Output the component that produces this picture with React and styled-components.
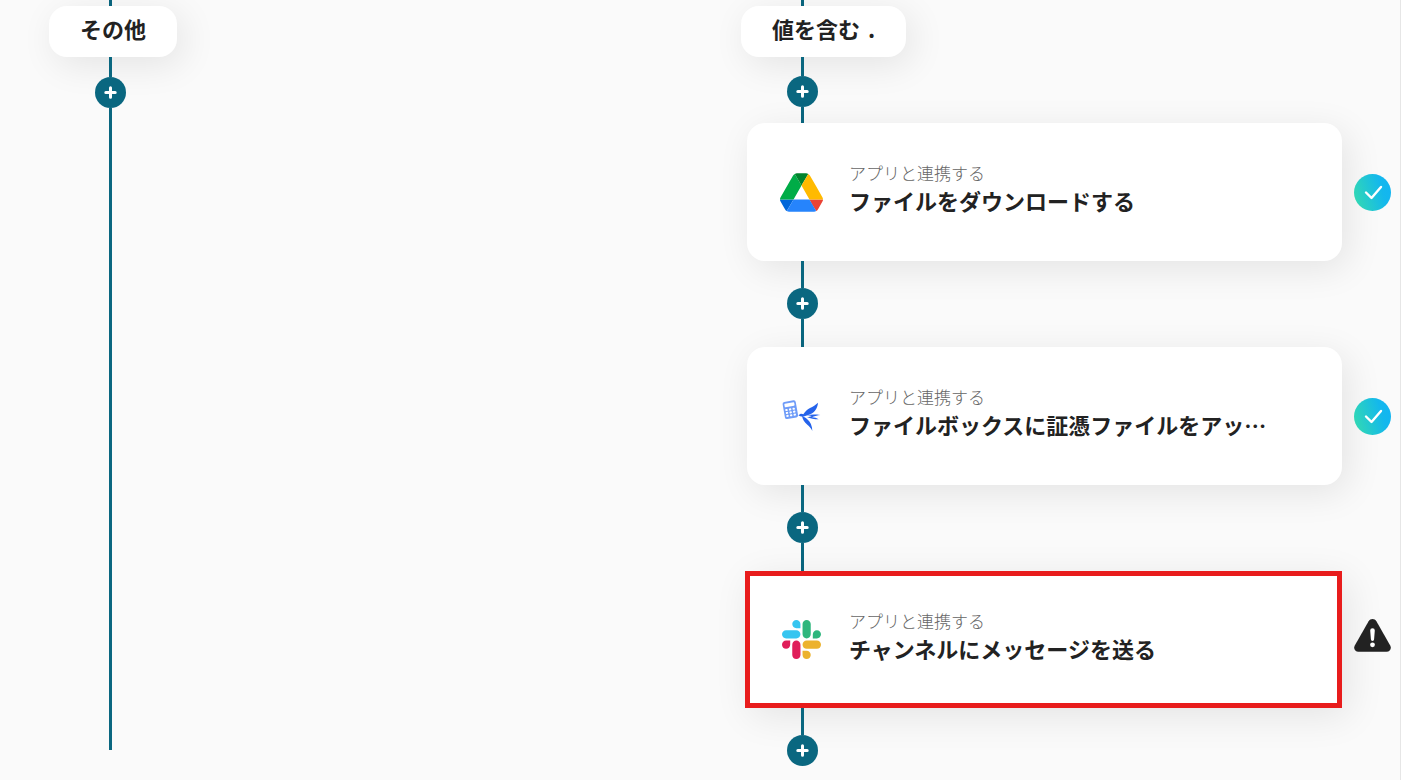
import styled, { createGlobalStyle } from "styled-components";

const steps = [
  {
    id: "download",
    app: "drive",
    title: "ファイルをダウンロードする",
    status: "done",
  },
  {
    id: "upload",
    app: "bird",
    title: "ファイルボックスに証憑ファイルをアッ…",
    status: "done",
  },
  {
    id: "message",
    app: "slack",
    title: "チャンネルにメッセージを送る",
    status: "warning",
    selected: true,
  },
];

function DriveIcon() {
  return (
    <svg width="43" height="39" viewBox="0 0 87.3 78" aria-hidden="true">
      <path fill="#0066da" d="m6.6 66.85 3.85 6.65c.8 1.4 1.95 2.5 3.3 3.3l13.75-23.8h-27.5c0 1.55.4 3.1 1.2 4.5z" />
      <path fill="#00ac47" d="m43.65 25-13.75-23.8c-1.35.8-2.5 1.9-3.3 3.3l-25.4 44a9.06 9.06 0 0 0 -1.2 4.5h27.5z" />
      <path fill="#ea4335" d="m73.55 76.8c1.35-.8 2.5-1.9 3.3-3.3l1.6-2.75 7.65-13.25c.8-1.4 1.2-2.95 1.2-4.5h-27.502l5.852 11.5z" />
      <path fill="#00832d" d="m43.65 25 13.75-23.8c-1.35-.8-2.9-1.2-4.5-1.2h-18.5c-1.6 0-3.15.45-4.5 1.2z" />
      <path fill="#2684fc" d="m59.8 53h-32.3l-13.75 23.8c1.35.8 2.9 1.2 4.5 1.2h50.8c1.6 0 3.15-.45 4.5-1.2z" />
      <path fill="#ffba00" d="m73.4 26.5-12.7-22c-.8-1.4-1.95-2.5-3.3-3.3l-13.75 23.8 16.15 28h27.45c0-1.55-.4-3.1-1.2-4.5z" />
    </svg>
  );
}

function BirdIcon() {
  return (
    <svg width="44" height="44" viewBox="28 27 132 132" aria-hidden="true">
      <g transform="rotate(-10 62 74)">
        <rect x="42" y="48" width="40" height="52" rx="6" fill="#6f9cf8" />
        <rect x="47" y="54" width="30" height="10" rx="2" fill="#fff" />
        <g fill="#fff">
          <rect x="47" y="70" width="7" height="6" rx="2" />
          <rect x="58" y="70" width="7" height="6" rx="2" />
          <rect x="69" y="70" width="7" height="6" rx="2" />
          <rect x="47" y="79" width="7" height="6" rx="2" />
          <rect x="58" y="79" width="7" height="6" rx="2" />
          <rect x="69" y="79" width="7" height="6" rx="2" />
          <rect x="47" y="88" width="7" height="6" rx="2" />
          <rect x="58" y="88" width="7" height="6" rx="2" />
          <rect x="69" y="88" width="7" height="6" rx="2" />
        </g>
      </g>
      <g fill="#2563eb">
        <path d="M86 91l6-4c3-1 7 0 9 1 5-8 11-14 20-19 9-5 17-9 24-16-1 15-9 28-22 34-5 2-10 4-14 5-3 1-6 2-9 3-6 0-11-2-14-4z" />
        <path d="M97 93c5 3 11 5 15 9 10 8 16 21 16 36-4-9-9-14-15-19-9-7-14-15-16-26z" />
        <path d="M109 91c14-3 28-3 43-1-8 1-16 3-22 5l-3 2c8 0 14 2 20 6-13 0-25-2-35-7 6 0 10-1 14-3-5-1-10-2-17-2z" />
      </g>
    </svg>
  );
}

function SlackIcon() {
  return (
    <svg width="39" height="39" viewBox="0 0 122.8 122.8" aria-hidden="true">
      <path fill="#e01e5a" d="M25.8 77.6c0 7.1-5.8 12.9-12.9 12.9S0 84.7 0 77.6s5.8-12.9 12.9-12.9h12.9v12.9zm6.5 0c0-7.1 5.8-12.9 12.9-12.9s12.9 5.8 12.9 12.9v32.3c0 7.1-5.8 12.9-12.9 12.9s-12.9-5.8-12.9-12.9V77.6z" />
      <path fill="#36c5f0" d="M45.2 25.8c-7.1 0-12.9-5.8-12.9-12.9S38.1 0 45.2 0s12.9 5.8 12.9 12.9v12.9H45.2zm0 6.5c7.1 0 12.9 5.8 12.9 12.9s-5.8 12.9-12.9 12.9H12.9C5.8 58.1 0 52.3 0 45.2s5.8-12.9 12.9-12.9h32.3z" />
      <path fill="#2eb67d" d="M97 45.2c0-7.1 5.8-12.9 12.9-12.9s12.9 5.8 12.9 12.9-5.8 12.9-12.9 12.9H97V45.2zm-6.5 0c0 7.1-5.8 12.9-12.9 12.9s-12.9-5.8-12.9-12.9V12.9C64.7 5.8 70.5 0 77.6 0s12.9 5.8 12.9 12.9v32.3z" />
      <path fill="#ecb22e" d="M77.6 97c7.1 0 12.9 5.8 12.9 12.9s-5.8 12.9-12.9 12.9-12.9-5.8-12.9-12.9V97h12.9zm0-6.5c-7.1 0-12.9-5.8-12.9-12.9s5.8-12.9 12.9-12.9h32.3c7.1 0 12.9 5.8 12.9 12.9s-5.8 12.9-12.9 12.9H77.6z" />
    </svg>
  );
}

const appIcons = { drive: DriveIcon, bird: BirdIcon, slack: SlackIcon };

function DoneIcon() {
  return (
    <svg width="37" height="37" viewBox="0 0 37 37" role="img" aria-label="完了">
      <defs>
        <linearGradient id="done" x1="0" y1="0.65" x2="1" y2="0.35">
          <stop offset="0" stopColor="#31d8b4" />
          <stop offset="0.75" stopColor="#14b8ec" />
          <stop offset="1" stopColor="#12b5f2" />
        </linearGradient>
      </defs>
      <circle cx="18.5" cy="18.5" r="18.5" fill="url(#done)" />
      <path
        d="M12 18.5l5.5 5.5 9.5-11"
        fill="none"
        stroke="#fff"
        strokeWidth="2.4"
        strokeLinecap="round"
        strokeLinejoin="round"
      />
    </svg>
  );
}

function WarningIcon() {
  return (
    <svg width="37" height="33" viewBox="0 0 37 33" role="img" aria-label="警告">
      <path
        fill="#222"
        d="M14.6 2.2C16.4-.7 20.6-.7 22.4 2.2L36.2 26.4C37.9 29.4 36 32.8 32.6 32.8H4.4C1 32.8-.9 29.4.8 26.4z"
      />
      <path fill="#fff" d="M16.2 11.500a2.300 2.300 0 0 1 4.600 0l-.7 8.800a1.600 1.600 0 0 1-3.200 0z" />
      <circle cx="18.5" cy="25.8" r="2.4" fill="#fff" />
    </svg>
  );
}

function AddStep() {
  return (
    <AddButton type="button" aria-label="追加">
      <svg width="13" height="13" viewBox="0 0 13 13" aria-hidden="true">
        <path d="M6.5 1.8v9.4M1.8 6.5h9.4" stroke="#fff" strokeWidth="3" strokeLinecap="round" />
      </svg>
    </AddButton>
  );
}

function Step({ step }) {
  const AppIcon = appIcons[step.app];

  return (
    <StepRow>
      <Card $selected={step.selected}>
        <IconBox>
          <AppIcon />
        </IconBox>
        <CardText>
          <CardCaption>アプリと連携する</CardCaption>
          <CardTitle>{step.title}</CardTitle>
        </CardText>
      </Card>
      <Status $raised={step.status === "warning"}>
        {step.status === "done" ? <DoneIcon /> : <WarningIcon />}
      </Status>
    </StepRow>
  );
}

function App() {
  return (
    <>
      <GlobalStyle />
      <Board>
        <Branch $open>
          <Line $height={6} />
          <BranchLabel>その他</BranchLabel>
          <Line $height={20} />
          <AddStep />
          <Line $grow />
        </Branch>
        <Branch>
          <Line $height={6} />
          <BranchLabel>
            値を含む <BranchValue>.</BranchValue>
          </BranchLabel>
          <Line $height={19} />
          <AddStep />
          <Line $height={16} />
          {steps.map((step, index) => (
            <StepGroup key={step.id}>
              <Step step={step} />
              <Line $height={27} />
              <AddStep />
              {index < steps.length - 1 && <Line $height={28} />}
            </StepGroup>
          ))}
        </Branch>
      </Board>
    </>
  );
}

export default App;

const GlobalStyle = createGlobalStyle`
  * {
    box-sizing: border-box;
  }
  body {
    margin: 0;
    background-color: #fafafa;
    color: #222;
    font-family: "Noto Sans CJK JP", sans-serif;
  }
`;

const Board = styled.main`
  display: grid;
  grid-template-columns: 1fr 650px;
  min-height: 100vh;
  padding: 0 9px 0 49px;
  border-right: 1px solid #e6e6e6;
`;

const Branch = styled.section`
  display: flex;
  flex-direction: column;
  align-items: flex-start;
  min-width: 0;
  padding-bottom: ${({ $open }) => ($open ? "30px" : "0")};
`;

const StepGroup = styled.div`
  display: flex;
  flex-direction: column;
  align-items: flex-start;
  width: 100%;
`;

const Line = styled.div`
  width: 3px;
  height: ${({ $height }) => ($height ? `${$height}px` : "auto")};
  flex-grow: ${({ $grow }) => ($grow ? 1 : 0)};
  margin-left: 60px;
  background-color: #0a6780;
`;

const BranchLabel = styled.div`
  height: 51px;
  padding: 0 31px;
  border-radius: 18px;
  background-color: #fff;
  box-shadow: 6px 8px 36px rgba(0, 0, 0, 0.09);
  font-size: 22px;
  font-weight: 700;
  line-height: 44px;
`;

const BranchValue = styled.span`
  margin-left: 3px;
`;

const AddButton = styled.button`
  display: flex;
  align-items: center;
  justify-content: center;
  width: 31px;
  height: 31px;
  margin-left: 46px;
  padding: 0;
  border: none;
  border-radius: 50%;
  background-color: #0a6780;
  cursor: pointer;
`;

const StepRow = styled.div`
  display: flex;
  align-items: center;
  gap: 12px;
  width: 100%;
  padding-left: 6px;
`;

const Card = styled.article`
  display: flex;
  flex: 1;
  align-items: center;
  gap: 26px;
  min-width: 0;
  height: 138px;
  padding: 0 32px;
  border-radius: 18px;
  background-color: #fff;
  box-shadow: 6px 8px 36px rgba(0, 0, 0, 0.09);

  ${({ $selected }) =>
    $selected &&
    `
    height: 137px;
    margin-left: -2px;
    padding: 0 29px;
    border: 5px solid #e81c1c;
    border-radius: 0;
  `}
`;

const IconBox = styled.div`
  display: flex;
  align-items: center;
  justify-content: center;
  flex-shrink: 0;
  width: 44px;
  height: 44px;
`;

const CardText = styled.div`
  min-width: 0;
  padding-bottom: 12px;
`;

const CardCaption = styled.p`
  margin: 0;
  color: #666;
  font-size: 17px;
  font-weight: 300;
  line-height: 28px;
`;

const CardTitle = styled.h2`
  margin: 0;
  font-size: 22px;
  font-weight: 700;
  line-height: 26px;
  white-space: nowrap;
`;

const Status = styled.div`
  display: flex;
  justify-content: center;
  flex-shrink: 0;
  width: 37px;
  padding-bottom: ${({ $raised }) => ($raised ? "8px" : "0")};
`;
